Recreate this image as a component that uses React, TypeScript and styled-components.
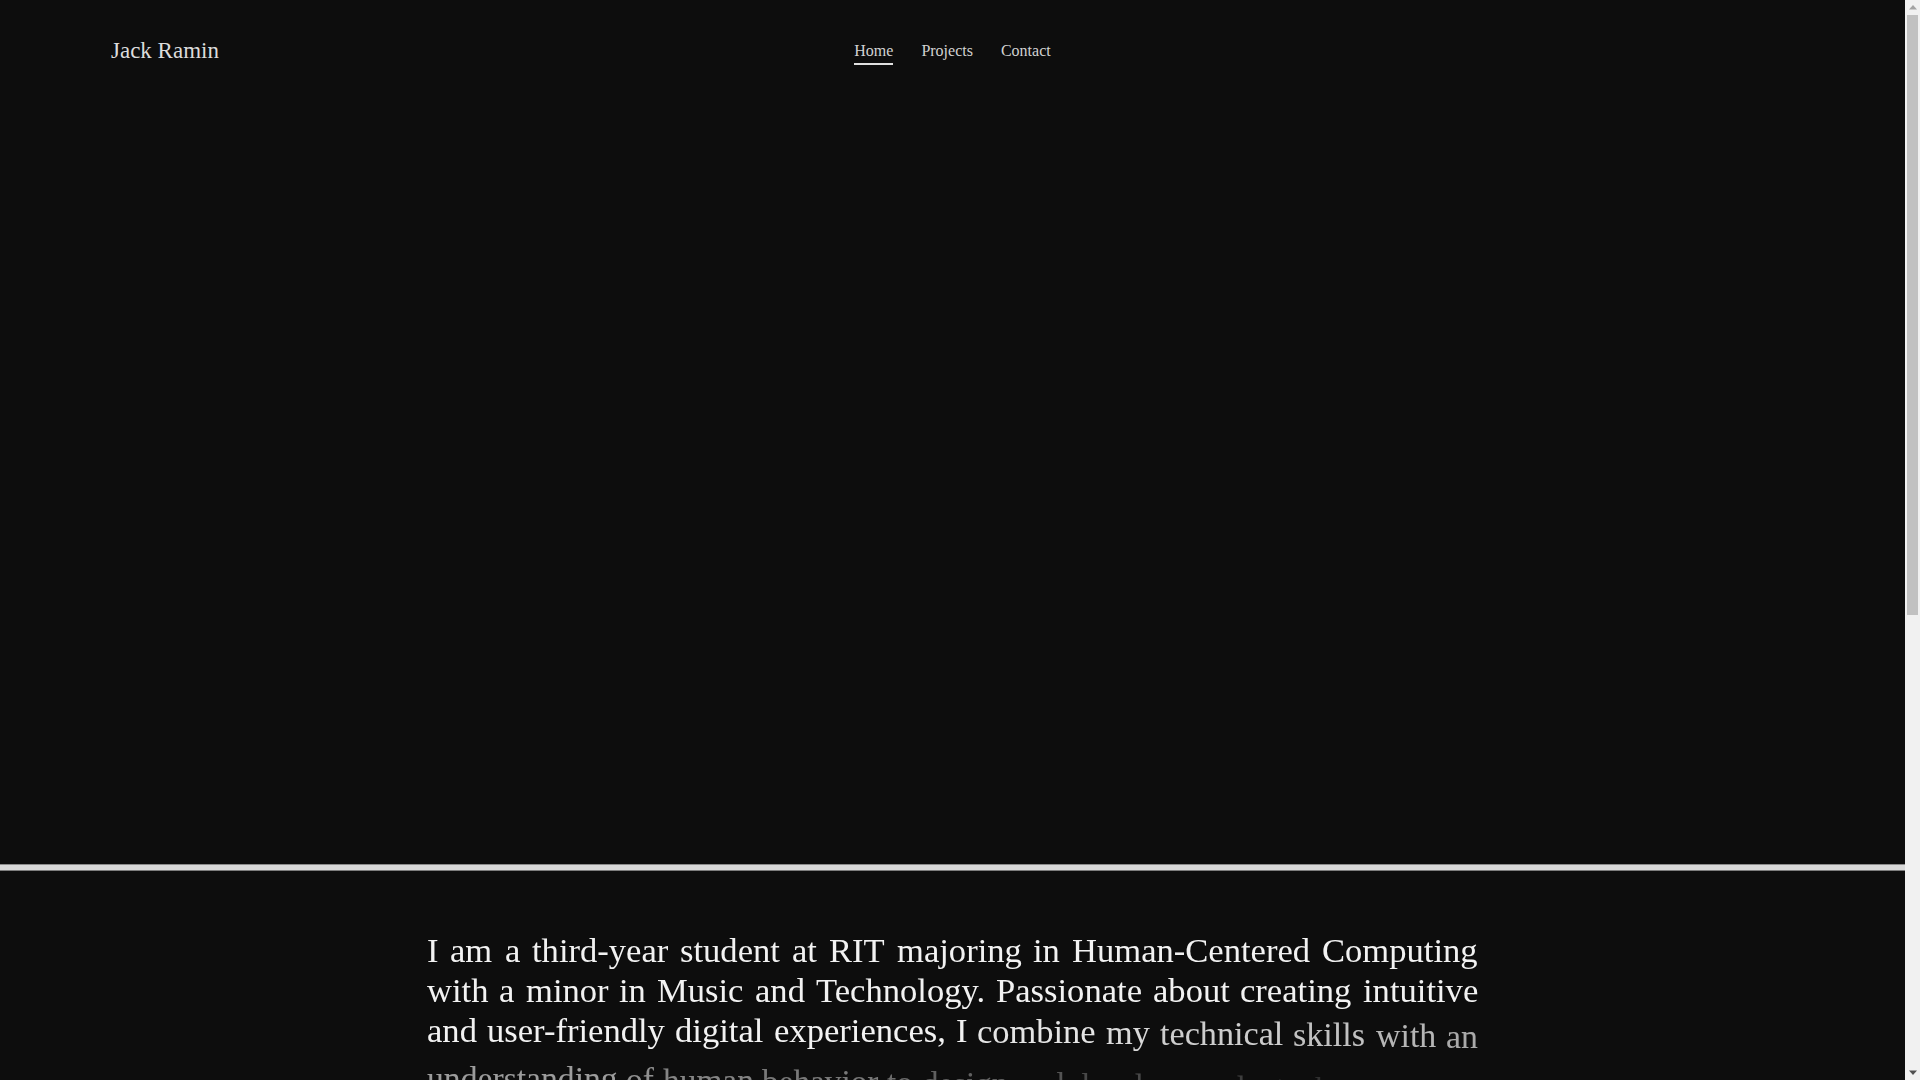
import React from "react";
import styled, { createGlobalStyle } from "styled-components";

const GlobalStyle = createGlobalStyle`
  html, body {
    margin: 0;
    padding: 0;
    background: #0d0d0d;
  }
  body {
    font-family: "Liberation Serif", "Times New Roman", serif;
    color: #e6e6e6;
  }
  * { box-sizing: border-box; }
`;

const Page = styled.div`
  position: relative;
  min-height: 1900px;
  margin-right: 15px;
  background: #0d0d0d;
`;

const Header = styled.header`
  position: absolute;
  top: 0;
  left: 0;
  right: 0;
  height: 102px;
  display: grid;
  grid-template-columns: 1fr auto 1fr;
  align-items: center;
  padding: 0 111px;
  z-index: 2;
`;

const Logo = styled.a`
  font-size: 23px;
  color: #dcdcdc;
  text-decoration: none;
  justify-self: start;
`;

const Nav = styled.nav`
  display: flex;
  gap: 28px;
  align-items: center;
`;

const NavLink = styled.a<{ $active?: boolean }>`
  font-size: 16px;
  color: #d2d2d2;
  text-decoration: none;
  padding-bottom: 3px;
  border-bottom: 2px solid ${(p) => (p.$active ? "#e0e0e0" : "transparent")};
  margin-top: 5px;
`;

const Hero = styled.section`
  height: 864px;
  background: #0d0d0d;
`;

const Divider = styled.div`
  height: 7px;
  background: #d9d9d9;
  border-top: 1px solid #8c8c8c;
  border-bottom: 1px solid #7d7d7d;
`;

const About = styled.section`
  padding: 59px 0 200px;
`;

const Paragraph = styled.p`
  max-width: 1051px;
  margin: 0 auto;
  font-size: 34.6px;
  line-height: 40px;
  text-align: justify;
  color: #f2f2f2;
`;

const Word = styled.span`
  display: inline-block;
  will-change: transform, opacity;
`;

const ScrollRail = styled.div`
  position: fixed;
  top: 0;
  right: 0;
  width: 15px;
  height: 100vh;
  background: #f1f1f1;
  display: flex;
  flex-direction: column;
  z-index: 10;
`;

const ArrowBtn = styled.div`
  height: 15px;
  flex: none;
  display: flex;
  align-items: center;
  justify-content: center;
`;

const Thumb = styled.div`
  flex: none;
  height: 600px;
  margin: 0 2px;
  background: #c1c1c1;
`;

const Spacer = styled.div`
  flex: 1;
`;

const TEXT =
  "I am a third-year student at RIT majoring in Human-Centered Computing with a minor in Music and Technology. Passionate about creating intuitive and user-friendly digital experiences, I combine my technical skills with an understanding of human behavior to design and develop products that matter.";

export default function App() {
  const words = TEXT.split(" ");
  return (
    <>
      <GlobalStyle />
      <Page>
        <Header>
          <Logo href="#">Jack Ramin</Logo>
          <Nav>
            <NavLink href="#" $active>
              Home
            </NavLink>
            <NavLink href="#">Projects</NavLink>
            <NavLink href="#">Contact</NavLink>
          </Nav>
          <span />
        </Header>
        <Hero />
        <Divider />
        <About>
          <Paragraph>
            {words.map((w, i) => {
              const p = i <= 26 ? 1 : Math.max(0, 1 - (i - 26) * 0.055);
              const q = 1 - p;
              return (
                <React.Fragment key={i}>
                  <Word
                    style={{
                      opacity: 0.04 + p * 0.96,
                      fontSize: `${(1 - q * 0.07).toFixed(3)}em`,
                      transform: `translateY(${(q * 18).toFixed(1)}px)`,
                    }}
                  >
                    {w}
                  </Word>
                  {i < words.length - 1 ? " " : null}
                </React.Fragment>
              );
            })}
          </Paragraph>
        </About>
      </Page>
      <ScrollRail aria-hidden>
        <ArrowBtn>
          <svg width="8" height="5" viewBox="0 0 8 5">
            <polygon points="4,0 8,4.5 0,4.5" fill="#a3a3a3" />
          </svg>
        </ArrowBtn>
        <Thumb />
        <Spacer />
        <ArrowBtn>
          <svg width="8" height="5" viewBox="0 0 8 5">
            <polygon points="0,0.5 8,0.5 4,5" fill="#505050" />
          </svg>
        </ArrowBtn>
      </ScrollRail>
    </>
  );
}
